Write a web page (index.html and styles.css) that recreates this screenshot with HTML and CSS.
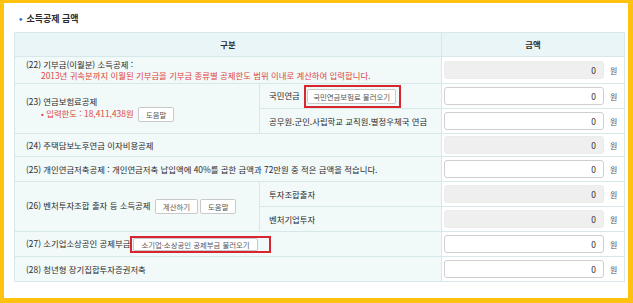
FILE: index.html
```html
<!DOCTYPE html>
<html lang="ko">
<head>
    <meta charset="UTF-8">
    <meta name="viewport" content="width=device-width, initial-scale=1.0">
    <title>소득공제 금액</title>
    <link rel="stylesheet" href="styles.css">
</head>
<body>
    <div class="panel">
        <h3 class="section-title"><span class="dot">•</span>소득공제 금액</h3>
        <table class="deduct">
            <colgroup>
                <col class="c-label">
                <col class="c-sub">
                <col class="c-amt">
            </colgroup>
            <thead>
                <tr><th colspan="2">구분</th><th>금액</th></tr>
            </thead>
            <tbody>
                <tr class="r-tall">
                    <td colspan="2" class="label">
                        (22) 기부금(이월분) 소득공제 :
                        <div class="note">2013년 귀속분까지 이월된 기부금을 기부금 종류별 공제한도 범위 이내로 계산하여 입력합니다.</div>
                    </td>
                    <td class="amt"><input type="text" class="num off" value="0" readonly><span class="won">원</span></td>
                </tr>
                <tr>
                    <td rowspan="2" class="label">
                        (23) 연금보험료공제
                        <div class="note limit">• 입력한도 : 18,411,438원 <button class="btn">도움말</button></div>
                    </td>
                    <td class="sub">국민연금 <span class="callout"><button class="btn">국민연금보험료 불러오기</button></span></td>
                    <td class="amt"><input type="text" class="num" value="0"><span class="won">원</span></td>
                </tr>
                <tr>
                    <td class="sub">공무원.군인.사립학교 교직원.별정우체국 연금</td>
                    <td class="amt"><input type="text" class="num" value="0"><span class="won">원</span></td>
                </tr>
                <tr class="r-short">
                    <td colspan="2" class="label">(24) 주택담보노후연금 이자비용공제</td>
                    <td class="amt"><input type="text" class="num off" value="0" readonly><span class="won">원</span></td>
                </tr>
                <tr>
                    <td colspan="2" class="label">(25) 개인연금저축공제 : 개인연금저축 납입액에 40%를 곱한 금액과 72만원 중 적은 금액을 적습니다.</td>
                    <td class="amt"><input type="text" class="num" value="0"><span class="won">원</span></td>
                </tr>
                <tr>
                    <td rowspan="2" class="label">(26) 벤처투자조합 출자 등 소득공제 <button class="btn">계산하기</button><button class="btn">도움말</button></td>
                    <td class="sub">투자조합출자</td>
                    <td class="amt"><input type="text" class="num off" value="0" readonly><span class="won">원</span></td>
                </tr>
                <tr>
                    <td class="sub">벤처기업투자</td>
                    <td class="amt"><input type="text" class="num off" value="0" readonly><span class="won">원</span></td>
                </tr>
                <tr>
                    <td colspan="2" class="label">(27) 소기업소상공인 공제부금<span class="callout wide"><button class="btn">소기업·소상공인 공제부금 불러오기</button></span></td>
                    <td class="amt"><input type="text" class="num" value="0"><span class="won">원</span></td>
                </tr>
                <tr>
                    <td colspan="2" class="label">(28) 청년형 장기집합투자증권저축</td>
                    <td class="amt"><input type="text" class="num" value="0"><span class="won">원</span></td>
                </tr>
            </tbody>
        </table>
    </div>
</body>
</html>
```

FILE: styles.css
```css
html, body {
    margin: 0;
    padding: 0;
}
body {
    background: #ffc20e;
    padding: 3px 5px 5px 4px;
    height: 303px;
    box-sizing: border-box;
    font-family: "Noto Sans CJK KR", "Noto Sans", sans-serif;
    color: #2b2b2b;
    overflow: hidden;
}
.panel {
    background: #fff;
    height: 295px;
    box-sizing: border-box;
    padding: 10px 4px 0 10px;
}
.section-title {
    margin: 0 0 7px 0;
    font-size: 9px;
    line-height: 12px;
    font-weight: 700;
    color: #2b2b2b;
}
.section-title .dot {
    color: #2f73c9;
    margin: 0 4px 0 5px;
}
.deduct {
    width: 610px;
    border-collapse: collapse;
    table-layout: fixed;
    font-size: 8.4px;
    line-height: 11px;
}
.c-label { width: 245px; }
.c-sub { width: 182px; }
.c-amt { width: 183px; }
.deduct th, .deduct td {
    border: 1px solid #d6e8ea;
    padding: 0;
}
.deduct th {
    height: 23px;
    background: #e9f5f6;
    font-weight: 700;
}
.deduct td {
    height: 24px;
    background: #f1f9f9;
}
.deduct tr.r-tall td { height: 26px; }
.deduct tr.r-short td { height: 22px; }
.deduct td.label {
    padding-left: 11px;
}
.deduct td.sub {
    padding-left: 9px;
}
.deduct td.amt {
    background: #fff;
    padding-left: 2px;
    white-space: nowrap;
}
.note {
    color: #e0453f;
    padding-left: 15px;
}
.num {
    width: 160px;
    height: 18px;
    box-sizing: border-box;
    border: 1px solid #cfcfcf;
    border-radius: 3px;
    background: #fff;
    text-align: right;
    padding: 0 7px 0 0;
    font-family: inherit;
    font-size: 8.4px;
    color: #2b2b2b;
    vertical-align: middle;
    outline: none;
}
.num.off {
    background: #efefef;
    border-color: #ececec;
}
.won {
    display: inline-block;
    margin-left: 6px;
    font-size: 8px;
    color: #555;
    vertical-align: middle;
}
.btn {
    height: 15px;
    padding: 0 7px;
    border: 1px solid #c9c9c9;
    border-radius: 2px;
    background: #fff;
    font-family: inherit;
    font-size: 7.4px;
    line-height: 13px;
    color: #555;
    vertical-align: middle;
    margin-left: 2px;
}
.callout {
    display: inline-block;
    border: 2px solid #d7262d;
    padding: 2px 3px 2px 1px;
    margin-left: 2px;
    vertical-align: middle;
    line-height: 0;
}
.callout .btn {
    margin-left: 0;
    padding: 0 5px;
}
.callout.wide {
    position: relative;
    margin-left: 0;
    padding: 0 11px 0 1px;
}
.callout.wide .btn {
    height: 13px;
    line-height: 11px;
    padding: 0 7px;
}
```
